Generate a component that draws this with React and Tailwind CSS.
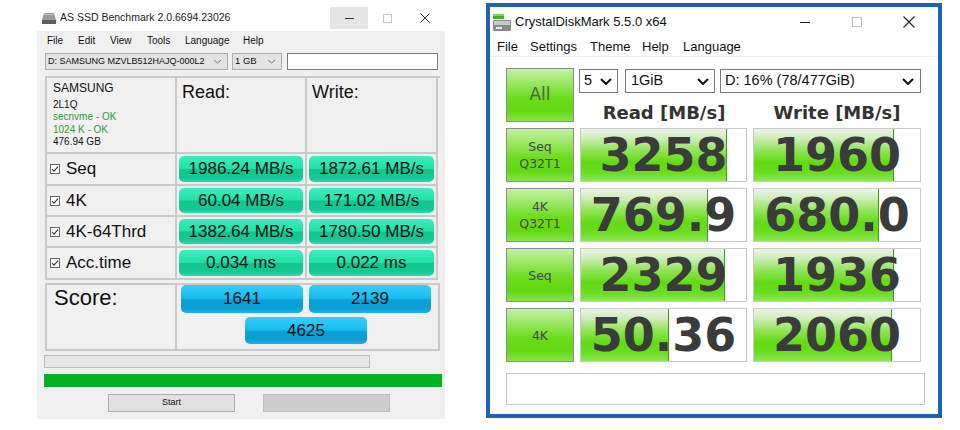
import React from "react";

const AS = "font-['Liberation_Sans',Arial,sans-serif]";
const DV = "font-['DejaVu_Sans',Verdana,sans-serif]";

function Check() {
  return (
    <svg width="10" height="10" viewBox="0 0 10 10" className="shrink-0">
      <rect x="0.5" y="0.5" width="9" height="9" fill="#fff" stroke="#666" />
      <polyline points="2,5 4,7.2 8,2.6" fill="none" stroke="#333" strokeWidth="1.1" />
    </svg>
  );
}

function Chev({ w = 10, h = 6, color = "#111", sw = 2 }) {
  return (
    <svg width={w} height={h} viewBox={`0 0 ${w} ${h}`} className="shrink-0">
      <polyline points={`1,1 ${w / 2},${h - 1} ${w - 1},1`} fill="none" stroke={color} strokeWidth={sw} />
    </svg>
  );
}

const tealGrad =
  "bg-[linear-gradient(to_bottom,#3cedbd_0%,#22e0a8_48%,#13c690_52%,#14c993_85%,#2bdcaa_100%)]";
const blueGrad =
  "bg-[linear-gradient(to_bottom,#34cff8_0%,#19bbef_48%,#0aa2d7_52%,#0b9fd4_85%,#1bb4ea_100%)]";

function AsCell({ v, blue }) {
  return (
    <div
      className={`h-full w-full rounded-[5px] ${blue ? blueGrad : tealGrad} flex items-center justify-center text-[17px] text-[#111] ${AS}`}
    >
      {v}
    </div>
  );
}

function AsSSD() {
  const rows = [
    ["Seq", "1986.24 MB/s", "1872.61 MB/s", "h-[32px]"],
    ["4K", "60.04 MB/s", "171.02 MB/s", "h-[31px]"],
    ["4K-64Thrd", "1382.64 MB/s", "1780.50 MB/s", "h-[31px]"],
    ["Acc.time", "0.034 ms", "0.022 ms", "h-[32px]"],
  ];
  const line = "border-[#cacaca]";
  return (
    <div className={`w-[408px] mt-[7px] ml-[37px] flex flex-col ${AS}`}>
      {/* title bar */}
      <div className="h-[24px] bg-white flex items-start">
        <div className="h-[22px] flex items-center pl-[5px]">
          <svg width="14" height="11" viewBox="0 0 14 11">
            <polygon points="2,0 12,0 14,7 0,7" fill="#9a9a9a" />
            <rect x="0" y="7" width="14" height="4" fill="#5e5e5e" />
            <rect x="2" y="1" width="10" height="1" fill="#c4c4c4" />
          </svg>
          <span className="ml-[4px] text-[10.5px] text-[#222]">AS SSD Benchmark 2.0.6694.23026</span>
        </div>
        <div className="flex-1" />
        <div className="w-[38px] h-[22px] bg-[#e5e5e5] flex items-center justify-center">
          <div className="w-[9px] h-px bg-[#333]" />
        </div>
        <div className="w-[38px] h-[22px] flex items-center justify-center">
          <div className="w-[9px] h-[9px] border border-[#c8c8c8]" />
        </div>
        <div className="w-[38px] h-[22px] flex items-center justify-center mr-[1px]">
          <svg width="10" height="10" viewBox="0 0 10 10">
            <line x1="0.5" y1="0.5" x2="9.5" y2="9.5" stroke="#333" strokeWidth="1" />
            <line x1="9.5" y1="0.5" x2="0.5" y2="9.5" stroke="#333" strokeWidth="1" />
          </svg>
        </div>
      </div>
      {/* body */}
      <div className="h-[388px] bg-[#f0f0f0] flex flex-col">
        <div className="h-[18px] flex items-center pl-[10px] text-[10px] text-[#111]">
          <span className="w-[31px]">File</span>
          <span className="w-[32px]">Edit</span>
          <span className="w-[37px]">View</span>
          <span className="w-[38px]">Tools</span>
          <span className="w-[58px]">Language</span>
          <span>Help</span>
        </div>
        <div className="mt-[4px] h-[17px] flex pl-[8px]">
          <div className="w-[183px] h-full bg-[#e3e3e3] border border-[#adadad] flex items-center pl-[2px] pr-[5px] text-[9px] text-[#111]">
            <span className="flex-1 whitespace-nowrap overflow-hidden">D: SAMSUNG MZVLB512HAJQ-000L2</span>
            <Chev w={9} h={5} color="#777" sw={1} />
          </div>
          <div className="ml-[4px] w-[50px] h-full bg-[#e3e3e3] border border-[#adadad] flex items-center pl-[2px] pr-[5px] text-[9.5px] text-[#111]">
            <span className="flex-1">1 GB</span>
            <Chev w={9} h={5} color="#777" sw={1} />
          </div>
          <div className="ml-[5px] w-[151px] h-full bg-white border border-[#7a7a7a]" />
        </div>
        {/* grid */}
        <div className={`mt-[6px] ml-[8px] w-[395px] border-t-2 border-l-2 ${line} grid grid-cols-[130px_130px_131px]`}>
          <div className={`h-[76px] border-r-2 border-b-2 ${line} pl-[6px] pt-[3px] text-[#111]`}>
            <div className="text-[12px] leading-[14px]">SAMSUNG</div>
            <div className="text-[10px] leading-[12.3px] mt-[4px]">2L1Q</div>
            <div className="text-[10px] leading-[12.3px] text-[#2f9a3c]">secnvme - OK</div>
            <div className="text-[10px] leading-[12.3px] text-[#2f9a3c]">1024 K - OK</div>
            <div className="text-[10px] leading-[12.3px]">476.94 GB</div>
          </div>
          <div className={`h-[76px] border-r-2 border-b-2 ${line} pl-[5px] pt-[1px] text-[18px] text-[#111]`}>Read:</div>
          <div className={`h-[76px] border-r-2 border-b-2 ${line} pl-[5px] pt-[1px] text-[18px] text-[#111]`}>Write:</div>
          {rows.map(([l, r, w, h]) => (
            <React.Fragment key={l}>
              <div className={`${h} border-r-2 border-b-2 ${line} flex items-center pl-[3px] gap-[6px] text-[17px] text-[#111]`}>
                <Check />
                <span>{l}</span>
              </div>
              <div className={`${h} border-r-2 border-b-2 ${line} p-[2px]`}>
                <AsCell v={r} />
              </div>
              <div className={`${h} border-r-2 border-b-2 ${line} p-[2px]`}>
                <AsCell v={w} />
              </div>
            </React.Fragment>
          ))}
        </div>
        {/* score */}
        <div className={`mt-[3px] ml-[8px] w-[395px] h-[68px] border-2 ${line} flex`}>
          <div className={`w-[130px] border-r-2 ${line} pl-[7px] text-[22px] leading-[26px] text-[#111]`}>Score:</div>
          <div className="flex-1 flex flex-col">
            <div className="flex h-[28px] pl-[4px] gap-[6px]">
              <div className="w-[122px] h-full">
                <AsCell v="1641" blue />
              </div>
              <div className="w-[122px] h-full">
                <AsCell v="2139" blue />
              </div>
            </div>
            <div className="mt-[4px] ml-[68px] w-[122px] h-[27px]">
              <AsCell v="4625" blue />
            </div>
          </div>
        </div>
        <div className="mt-[4px] ml-[7px] w-[326px] h-[13px] bg-[#e6e6e6] border border-[#bcbcbc]" />
        <div className="mt-[6px] ml-[7px] w-[398px] h-[13px] bg-[#06b025]" />
        <div className="mt-[7px] flex h-[18px]">
          <div className="ml-[71px] w-[127px] h-full bg-[#e1e1e1] border border-[#adadad] flex items-center justify-center text-[9px] text-[#111]">
            Start
          </div>
          <div className="ml-[28px] w-[127px] h-full bg-[#cccccc] border border-[#bfbfbf]" />
        </div>
      </div>
    </div>
  );
}

const greenGrad =
  "bg-[linear-gradient(to_bottom,#eef4ec_0%,#cdeeb8_18%,#8fe453_42%,#62da12_65%,#6ade22_85%,#8ee65a_100%)]";
const btnGrad =
  "bg-[linear-gradient(to_bottom,#c6f0a8_0%,#9ce868_25%,#6cdc1c_55%,#62d810_80%,#88e44c_100%)]";

function CdmCell({ v, pct, w }) {
  return (
    <div className={`${w} h-full border border-[#c9c9c9] bg-white relative flex items-center justify-center`}>
      <div
        className={`absolute left-0 top-0 bottom-0 ${greenGrad} border-r border-[#3f9a22]`}
        style={{ width: `${pct}%` }}
      />
      <span className={`relative text-[46px] leading-none font-bold text-[#3b3b3b] ${DV}`}>{v}</span>
    </div>
  );
}

function Crystal() {
  const rows = [
    { l1: "Seq", l2: "Q32T1", r: "3258", rp: 88.6, w: "1960", wp: 84.5 },
    { l1: "4K", l2: "Q32T1", r: "769.9", rp: 76.8, w: "680.0", wp: 75.6 },
    { l1: "Seq", r: "2329", rp: 87, w: "1936", wp: 84.5 },
    { l1: "4K", r: "50.36", rp: 53.3, w: "2060", wp: 83.3 },
  ];
  return (
    <div className={`ml-[41px] mt-[3px] w-[456px] h-[415px] border-4 border-[#1e62b3] bg-white flex flex-col ${AS}`}>
      {/* title */}
      <div className="h-[30px] flex items-center">
        <svg width="18" height="17" viewBox="0 0 18 17" className="ml-[3px]">
          <rect x="0" y="0" width="11" height="5" fill="#43b02a" />
          <rect x="0" y="0" width="11" height="2" fill="#7ad65a" />
          <rect x="0" y="6" width="18" height="11" rx="1" fill="#8a8a8a" />
          <rect x="1" y="7" width="16" height="4" fill="#c9c9c9" />
          <rect x="3" y="13" width="6" height="2" fill="#e8e8e8" />
        </svg>
        <span className="ml-[4px] text-[13px] text-[#111]">CrystalDiskMark 5.5.0 x64</span>
        <div className="flex-1" />
        <div className="w-[52px] h-[30px] flex items-center justify-center">
          <div className="w-[10px] h-px bg-[#222]" />
        </div>
        <div className="w-[52px] h-[30px] flex items-center justify-center">
          <div className="w-[10px] h-[10px] border border-[#bdbdbd]" />
        </div>
        <div className="w-[52px] h-[30px] flex items-center justify-center mr-[3px]">
          <svg width="12" height="12" viewBox="0 0 12 12">
            <line x1="0.5" y1="0.5" x2="11.5" y2="11.5" stroke="#222" strokeWidth="1.1" />
            <line x1="11.5" y1="0.5" x2="0.5" y2="11.5" stroke="#222" strokeWidth="1.1" />
          </svg>
        </div>
      </div>
      {/* menu */}
      <div className="h-[20px] flex items-center pl-[7px] text-[13px] text-[#111] border-b border-[#f0f0f0]">
        <span className="w-[33px]">File</span>
        <span className="w-[60px]">Settings</span>
        <span className="w-[52px]">Theme</span>
        <span className="w-[41px]">Help</span>
        <span>Language</span>
      </div>
      {/* top */}
      <div className="mt-[11px] pl-[16px] flex">
        <div className={`w-[68px] h-[54px] border border-[#8d8d8d] ${btnGrad} flex items-center justify-center text-[17px] text-[#4d6a40] ${DV}`}>
          All
        </div>
        <div className="ml-[5px] flex flex-col">
          <div className="mt-[1px] h-[24px] flex text-[14.5px] text-[#111]">
            <div className="w-[39px] h-full border border-[#7a7a7a] flex items-center pl-[4px] pr-[5px]">
              <span className="flex-1">5</span>
              <Chev w={12} h={7} />
            </div>
            <div className="ml-[7px] w-[90px] h-full border border-[#7a7a7a] flex items-center pl-[5px] pr-[5px]">
              <span className="flex-1">1GiB</span>
              <Chev w={12} h={7} />
            </div>
            <div className="ml-[5px] w-[201px] h-full border border-[#7a7a7a] flex items-center pl-[4px] pr-[6px]">
              <span className="flex-1 whitespace-nowrap">D: 16% (78/477GiB)</span>
              <Chev w={12} h={7} />
            </div>
          </div>
          <div className={`mt-[4px] h-[30px] flex items-center text-[18px] font-bold text-[#333] ${DV}`}>
            <div className="w-[168px] text-center ml-[1px]">Read [MB/s]</div>
            <div className="w-[168px] ml-[5px] text-center">Write [MB/s]</div>
          </div>
        </div>
      </div>
      {/* rows */}
      <div className="mt-[1px] pl-[16px] flex flex-col gap-[6px]">
        {rows.map((r, i) => (
          <div key={i} className="h-[54px] flex">
            <div
              className={`w-[68px] h-full border border-[#8d8d8d] ${btnGrad} flex flex-col items-center justify-center text-[12.5px] leading-[17px] text-[#474747] ${DV}`}
            >
              <span>{r.l1}</span>
              {r.l2 && <span>{r.l2}</span>}
            </div>
            <div className="ml-[6px] h-full">
              <CdmCell v={r.r} pct={r.rp} w="w-[167px]" />
            </div>
            <div className="ml-[6px] h-full">
              <CdmCell v={r.w} pct={r.wp} w="w-[168px]" />
            </div>
          </div>
        ))}
      </div>
      <div className="mt-[11px] ml-[16px] w-[419px] h-[32px] border border-[#c9c9c9] bg-white" />
    </div>
  );
}

export default function App() {
  return (
    <div className="w-[960px] h-[430px] bg-white flex items-start overflow-hidden">
      <AsSSD />
      <Crystal />
    </div>
  );
}
